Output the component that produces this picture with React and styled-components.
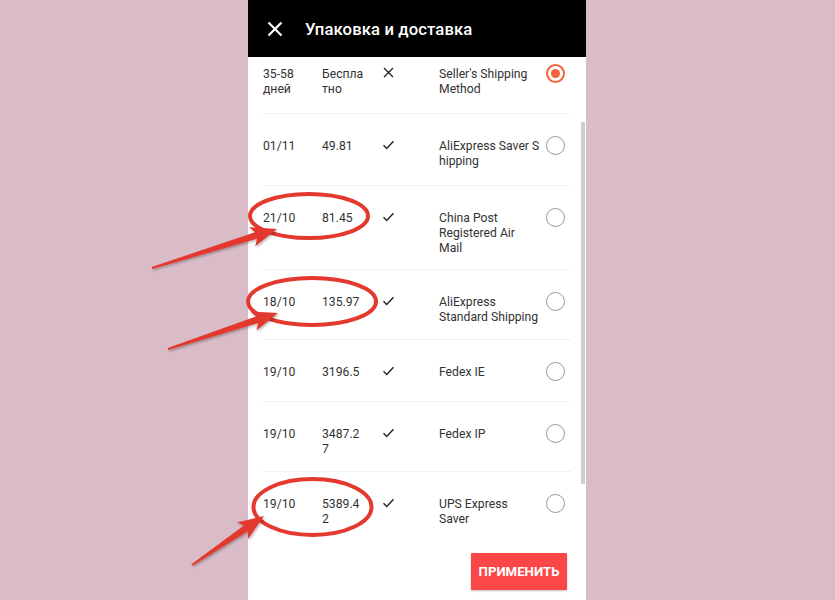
import React from "react";
import styled, { createGlobalStyle } from "styled-components";

const GlobalStyle = createGlobalStyle`
  html, body { margin: 0; padding: 0; }
  body {
    background: #d9bcc7;
    font-family: Roboto, "Noto Sans", Arial, sans-serif;
  }
`;

const Page = styled.div`
  position: relative;
  width: 835px;
  height: 600px;
  display: flex;
  justify-content: center;
  overflow: hidden;
`;

const Phone = styled.div`
  width: 338px;
  height: 600px;
  background: #ffffff;
  display: flex;
  flex-direction: column;
  margin-right: 1px;
`;

const Header = styled.header`
  height: 57px;
  flex: none;
  background: #000;
  color: #fff;
  display: flex;
  align-items: center;
  padding-left: 19px;
  gap: 22px;
`;

const Title = styled.h1`
  margin: 0;
  font-size: 16.7px;
  font-weight: 500;
  letter-spacing: 0.1px;
  line-height: 1;
  padding-top: 3px;
`;

const ListViewport = styled.div`
  position: relative;
  flex: none;
  overflow: hidden;
`;

const List = styled.div`
  margin-top: -15px;
  display: flex;
  flex-direction: column;
`;

const Row = styled.div`
  height: ${(p) => p.$h}px;
  box-sizing: border-box;
  margin: 0 15px;
  padding-top: 25px;
  display: grid;
  grid-template-columns: 59px 61px 56px 1fr 25px;
  align-items: start;
  border-bottom: ${(p) => (p.$last ? "none" : "1px solid #f1f1f1")};
  font-size: 12.2px;
  line-height: 15px;
  color: #333;
`;

const Cell = styled.div`
  white-space: pre-line;
`;

const Mark = styled.div`
  display: flex;
  align-items: center;
  height: 15px;
  margin-top: -2px;
`;

const Radio = styled.div`
  width: 19px;
  height: 19px;
  box-sizing: border-box;
  border-radius: 50%;
  margin-top: -3px;
  border: ${(p) => (p.$on ? "2px solid #f4633a" : "1.5px solid #9a9a9a")};
  display: flex;
  align-items: center;
  justify-content: center;
  &::after {
    content: "";
    display: ${(p) => (p.$on ? "block" : "none")};
    width: 9px;
    height: 9px;
    border-radius: 50%;
    background: #f4633a;
  }
`;

const Scrollbar = styled.div`
  position: absolute;
  right: 1px;
  top: 65px;
  width: 4px;
  height: 362px;
  background: #cdcdcd;
`;

const Footer = styled.div`
  flex: none;
  display: flex;
  justify-content: flex-end;
  padding: 11px 19px 0 0;
`;

const ApplyButton = styled.button`
  width: 96px;
  height: 37px;
  border: none;
  border-radius: 1px;
  background: #fb4747;
  color: #fff;
  font-family: Roboto, Arial, sans-serif;
  font-weight: 700;
  font-size: 13.2px;
  letter-spacing: 0;
  box-shadow: 0 1px 2px rgba(0, 0, 0, 0.25);
  padding: 0;
`;

const Overlay = styled.svg`
  position: absolute;
  left: 0;
  top: 0;
  pointer-events: none;
`;

const CloseIcon = () => (
  <svg width="16" height="16" viewBox="0 0 16 16">
    <path d="M1.5 1.5 L14.5 14.5 M14.5 1.5 L1.5 14.5" stroke="#fff" strokeWidth="2.2" strokeLinecap="butt" />
  </svg>
);

const CheckIcon = () => (
  <svg width="12" height="10" viewBox="0 0 12 10">
    <path d="M0.5 5.2 L3.7 8.4 L10.5 1.2" fill="none" stroke="#222" strokeWidth="1.4" />
  </svg>
);

const CrossIcon = () => (
  <svg width="11" height="11" viewBox="0 0 11 11">
    <path d="M1 1 L10 10 M10 1 L1 10" fill="none" stroke="#222" strokeWidth="1.3" />
  </svg>
);

const rows = [
  { date: "35-58\nдней", price: "Беспла\nтно", ok: false, name: "Seller's Shipping\nMethod", on: true, h: 72 },
  { date: "01/11", price: "49.81", ok: true, name: "AliExpress Saver S\nhipping", h: 72 },
  { date: "21/10", price: "81.45", ok: true, name: "China Post\nRegistered Air\nMail", h: 84 },
  { date: "18/10", price: "135.97", ok: true, name: "AliExpress\nStandard Shipping", h: 70 },
  { date: "19/10", price: "3196.5", ok: true, name: "Fedex IE", h: 62 },
  { date: "19/10", price: "3487.2\n7", ok: true, name: "Fedex IP", h: 70 },
  { date: "19/10", price: "5389.4\n2", ok: true, name: "UPS Express\nSaver", h: 70, last: true },
];

function arrowPoints(tail, tip, headLen = 22, headHalf = 10, w0 = 1, w1 = 3.4) {
  const dx = tip[0] - tail[0];
  const dy = tip[1] - tail[1];
  const len = Math.hypot(dx, dy);
  const ux = dx / len;
  const uy = dy / len;
  const nx = -uy;
  const ny = ux;
  const bx = tip[0] - ux * headLen;
  const by = tip[1] - uy * headLen;
  const barbBack = 4;
  const pts = [
    [tail[0] + nx * w0, tail[1] + ny * w0],
    [bx + nx * w1, by + ny * w1],
    [bx - ux * barbBack + nx * headHalf, by - uy * barbBack + ny * headHalf],
    tip,
    [bx - ux * barbBack - nx * headHalf, by - uy * barbBack - ny * headHalf],
    [bx - nx * w1, by - ny * w1],
    [tail[0] - nx * w0, tail[1] - ny * w0],
  ];
  return pts.map((p) => p.map((v) => v.toFixed(1)).join(",")).join(" ");
}

const RED = "#e3392f";

const ellipses = [
  { cx: 309, cy: 216, rx: 59, ry: 22 },
  { cx: 312, cy: 301.5, rx: 64, ry: 23.5 },
  { cx: 312.5, cy: 507, rx: 59, ry: 28 },
];

const arrows = [
  { tail: [152, 268], tip: [277, 229] },
  { tail: [168, 349], tip: [278, 313] },
  { tail: [192, 565], tip: [264, 516] },
];

export default function App() {
  return (
    <>
      <GlobalStyle />
      <Page>
        <Phone>
          <Header>
            <CloseIcon />
            <Title>Упаковка и доставка</Title>
          </Header>
          <ListViewport>
            <List>
              {rows.map((r, i) => (
                <Row key={i} $h={r.h} $last={r.last}>
                  <Cell>{r.date}</Cell>
                  <Cell>{r.price}</Cell>
                  <Mark>{r.ok ? <CheckIcon /> : <CrossIcon />}</Mark>
                  <Cell>{r.name}</Cell>
                  <Radio $on={r.on} />
                </Row>
              ))}
            </List>
            <Scrollbar />
          </ListViewport>
          <Footer>
            <ApplyButton>ПРИМЕНИТЬ</ApplyButton>
          </Footer>
        </Phone>
        <Overlay width="835" height="600" viewBox="0 0 835 600">
          <defs>
            <filter id="sh" x="-20%" y="-20%" width="140%" height="140%">
              <feDropShadow dx="1" dy="1.5" stdDeviation="1" floodColor="#000" floodOpacity="0.3" />
            </filter>
          </defs>
          {ellipses.map((e, i) => (
            <ellipse key={i} cx={e.cx} cy={e.cy} rx={e.rx} ry={e.ry} fill="none" stroke={RED} strokeWidth="4" />
          ))}
          {arrows.map((a, i) => (
            <polygon key={i} points={arrowPoints(a.tail, a.tip)} fill={RED} filter="url(#sh)" />
          ))}
        </Overlay>
      </Page>
    </>
  );
}
